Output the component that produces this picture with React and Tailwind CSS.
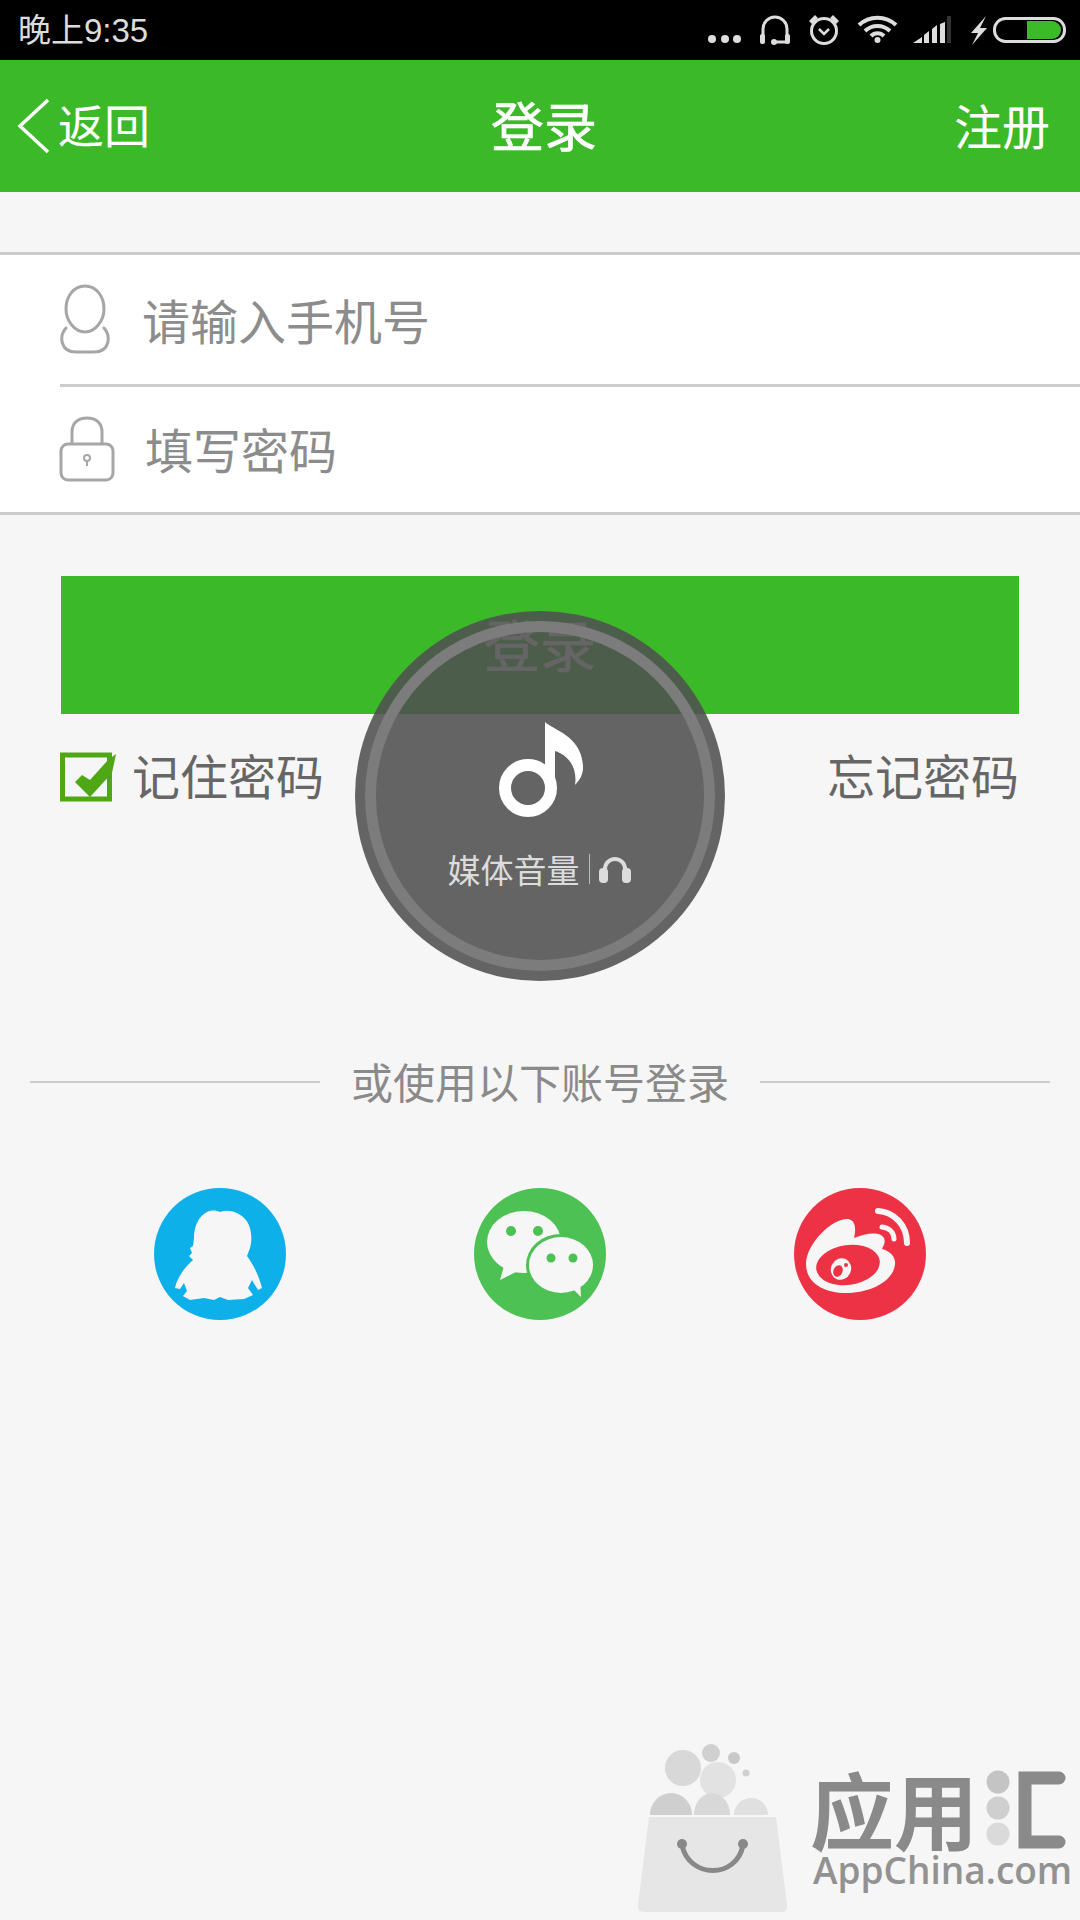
import React from 'react'

const cjk = { fontFamily: '"Noto Sans CJK SC", "Noto Sans", sans-serif' }

function StatusIcons() {
  return (
    <div className="flex items-center">
      <svg width="370" height="60" viewBox="0 0 370 60" fill="none">
        {/* dots */}
        <circle cx="12" cy="39" r="4" fill="#ddd" />
        <circle cx="25" cy="39" r="4" fill="#ddd" />
        <circle cx="37" cy="39" r="4" fill="#ddd" />
        {/* headset */}
        <path d="M63 37V29a12 12 0 0 1 24 0V37" stroke="#ddd" strokeWidth="3" />
        <rect x="60" y="34" width="5" height="10" rx="2" fill="#ddd" />
        <rect x="85" y="34" width="5" height="10" rx="2" fill="#ddd" />
        <path d="M74 42h13" stroke="#ddd" strokeWidth="3" />
        <circle cx="74" cy="42" r="3" fill="#ddd" />
        {/* alarm */}
        <circle cx="124" cy="31" r="12.500" stroke="#ddd" strokeWidth="3" />
        <path d="M119 29l5 5 5-5" stroke="#ddd" strokeWidth="2.500" />
        <path d="M109 21l6-6 3 3-6 6zM139 21l-6-6-3 3 6 6z" fill="#ddd" />
        {/* wifi */}
        <path d="M159 25a27 27 0 0 1 37 0" stroke="#ddd" strokeWidth="4" />
        <path d="M165 31a18 18 0 0 1 25 0" stroke="#ddd" strokeWidth="4" />
        <path d="M171 36a9 9 0 0 1 13 0" stroke="#ddd" strokeWidth="4" />
        <circle cx="177.500" cy="40" r="3" fill="#ddd" />
        {/* signal */}
        <path d="M213 43l9-6v6zM224 35l5-4v12h-5zM232 29l5-4v18h-5zM240 24l5-2v21h-5z" fill="#ddd" />
        <rect x="247" y="16" width="4" height="27" fill="#333" />
        {/* bolt */}
        <path d="M286 16l-15 17h7l-6 12 15-17h-7z" fill="#ddd" />
        {/* battery */}
        <rect x="294.500" y="18.500" width="70" height="23" rx="11" stroke="#ddd" strokeWidth="3" />
        <path d="M327 21h25a9 9 0 0 1 0 18h-25z" fill="#3cbb28" />
      </svg>
    </div>
  )
}

function UserIcon() {
  return (
    <svg width="52" height="72" viewBox="0 0 52 72" fill="none" stroke="#a6a6a6" strokeWidth="3" className="-ml-px">
      <path d="M26 2c11 0 19 10 19 23 0 12-9 23-19 23S7 37 7 25C7 12 15 2 26 2z" />
      <path d="M7 44c-7 8-6 24 10 24h18c16 0 17-16 10-24" strokeLinecap="round" />
    </svg>
  )
}

function LockIcon() {
  return (
    <svg width="56" height="66" viewBox="0 0 56 66" fill="none" stroke="#a6a6a6" strokeWidth="3" className="-ml-px -mt-[2px]">
      <path d="M13 28V16C13 7 19 2 28 2s15 5 15 14v12" />
      <rect x="2" y="28" width="52" height="36" rx="7" />
      <circle cx="28" cy="42" r="3" strokeWidth="2" />
      <path d="M28 45v5" strokeWidth="2" />
    </svg>
  )
}

function QQIcon() {
  return (
    <svg width="132" height="132" viewBox="0 0 132 132">
      <circle cx="66" cy="66" r="66" fill="#0db0e8" />
      <path
        d="M66 24C62 22 57 22 53 24C45 28 40 38 40 50L39 58L36 60L38 65L35 68L39 72C30 80 25 88 22 96L21 100L26 101L30 95L33 103L29 108L36 112L50 110L60 112L66 109L74 112L90 111L99 107L94 100L98 92L104 102L108 100C105 88 100 78 93 68L96 60C99 50 97 36 90 30C84 24 74 21 66 24Z"
        fill="#f6f6f6"
      />
    </svg>
  )
}

function WeChatIcon() {
  return (
    <svg width="132" height="132" viewBox="0 0 132 132">
      <circle cx="66" cy="66" r="66" fill="#4dc153" />
      <ellipse cx="50" cy="54" rx="37" ry="31" fill="#f6f6f6" />
      <path d="M30 78l-4 14 20-10z" fill="#f6f6f6" />
      <circle cx="37" cy="43" r="5" fill="#4dc153" />
      <circle cx="64" cy="43" r="5" fill="#4dc153" />
      <ellipse cx="87" cy="77" rx="35" ry="31" fill="#4dc153" />
      <ellipse cx="87" cy="77" rx="32" ry="28" fill="#f6f6f6" />
      <path d="M96 98l11 11-1-18z" fill="#f6f6f6" />
      <circle cx="77" cy="70" r="4.500" fill="#4dc153" />
      <circle cx="99" cy="70" r="4.500" fill="#4dc153" />
    </svg>
  )
}

function WeiboIcon() {
  return (
    <svg width="132" height="132" viewBox="0 0 132 132">
      <circle cx="66" cy="66" r="66" fill="#ee3245" />
      <path
        d="M12 76C12 56 38 30 54 31C62 32 62 42 60 50C72 45 86 43 90 50C92 55 89 58 88 61C96 63 102 69 101 76C100 92 78 105 52 105C30 105 12 95 12 76Z"
        fill="#f6f6f6"
      />
      <ellipse cx="54" cy="77" rx="32" ry="20" fill="#ee3245" transform="rotate(-8 54 77)" />
      <ellipse cx="47" cy="81" rx="10" ry="11" fill="#f6f6f6" transform="rotate(25 47 81)" />
      <ellipse cx="44" cy="83" rx="4.500" ry="6" fill="#ee3245" transform="rotate(25 44 83)" />
      <circle cx="52" cy="77" r="2" fill="#ee3245" />
      <path d="M84 23c16 1 29 14 29 32" stroke="#f6f6f6" strokeWidth="6" fill="none" strokeLinecap="round" />
      <path d="M88 39c7 1 12 5 12 12" stroke="#f6f6f6" strokeWidth="5" fill="none" strokeLinecap="round" />
    </svg>
  )
}

function VolumeOverlay() {
  return (
    <div className="absolute left-[355px] top-[611px] w-[370px] h-[370px] rounded-full bg-[rgba(80,80,80,0.88)] p-[10px]">
      <div className="w-full h-full rounded-full border-[11px] border-[#7c7c7c] flex flex-col items-center pt-[90px]">
        <svg width="86" height="96" viewBox="0 0 86 96" fill="none" className="ml-[2px]">
          <circle cx="30" cy="66" r="23" stroke="#fff" strokeWidth="12" />
          <path d="M47 66V0c8 8 38 14 38 46 0 6-3 12-8 17 2-12-2-28-20-34v37z" fill="#fff" />
        </svg>
        <div className="flex items-center mt-[29px] -ml-[2px] text-[#dcdcdc] text-[33px] leading-[44px]" style={cjk}>
          <span>媒体音量</span>
          <span className="w-px h-[30px] bg-[#bbb] mx-[9px]" />
          <svg width="32" height="28" viewBox="0 0 32 28" fill="none">
            <path d="M6 20V14a10 10 0 0 1 20 0v6" stroke="#dcdcdc" strokeWidth="4" />
            <rect x="0" y="13" width="9" height="15" rx="4" fill="#dcdcdc" />
            <rect x="23" y="13" width="9" height="15" rx="4" fill="#dcdcdc" />
          </svg>
        </div>
      </div>
    </div>
  )
}

function Watermark() {
  return (
    <div className="absolute left-[638px] top-[1742px] flex items-start gap-[22px]">
      <svg width="150" height="170" viewBox="0 0 150 170">
        <circle cx="73" cy="11" r="9" fill="#d0d0d0" />
        <circle cx="96" cy="16" r="6" fill="#c8c8c8" />
        <circle cx="108" cy="31" r="3.500" fill="#d0d0d0" />
        <circle cx="45" cy="26" r="18" fill="#d8d8d8" />
        <circle cx="80" cy="38" r="18" fill="#e2e2e2" />
        <path d="M12 73a21 22 0 1 1 42 0z" fill="#cfcfcf" />
        <path d="M56 73a18 22 0 1 1 36 0z" fill="#d8d8d8" />
        <path d="M96 73a17 17 0 1 1 34 0z" fill="#e0e0e0" />
        <path d="M11 75h127l11 88q1 7-7 7H7q-8 0-7-7z" fill="#e6e6e6" />
        <path d="M44 103c7 34 55 34 61 0" fill="none" stroke="#888" strokeWidth="5" />
        <circle cx="44" cy="102" r="5" fill="#888" />
        <circle cx="105" cy="102" r="5" fill="#888" />
      </svg>
      <div className="flex flex-col pt-[24px]">
        <div className="flex items-center h-[84px]">
          <span className="text-[#8a8a8a] text-[84px] leading-[84px] font-bold" style={cjk}>
            应用
          </span>
          <svg width="86" height="84" viewBox="0 0 86 84" className="ml-[6px]">
            <circle cx="14" cy="16" r="11.500" fill="#c4c4c4" />
            <circle cx="14" cy="42" r="11.500" fill="#cfcfcf" />
            <circle cx="14" cy="68" r="11.500" fill="#dadada" />
            <path d="M75 12H41v64h34" fill="none" stroke="#8a8a8a" strokeWidth="13" strokeLinecap="round" />
          </svg>
        </div>
        <span className="pl-[3px] text-[#929292] text-[37px] leading-[40px] font-semibold whitespace-nowrap [font-family:'Open_Sans',sans-serif]">
          AppChina.com
        </span>
      </div>
    </div>
  )
}

export default function App() {
  return (
    <div className="relative w-[1080px] h-[1920px] overflow-hidden bg-[#f6f6f6] flex flex-col" style={cjk}>
      <div className="h-[60px] bg-black flex items-center justify-between pl-[18px] pr-[10px] shrink-0">
        <span className="text-[#dcdcdc] text-[33px] leading-[60px] pb-[2px]">
          晚上<span className="[font-family:'Liberation_Sans',sans-serif]">9:35</span>
        </span>
        <StatusIcons />
      </div>

      <div className="h-[132px] bg-[#3cb928] flex items-center justify-between text-white shrink-0">
        <div className="flex items-center pl-[16px] gap-[6px] w-[200px]">
          <svg width="36" height="56" viewBox="0 0 36 56" fill="none">
            <path d="M32 2L4 28l28 26" stroke="#fff" strokeWidth="3.500" />
          </svg>
          <span className="text-[46px] leading-[60px] mb-[6px]">返回</span>
        </div>
        <span className="ml-[8px] mb-[5px] text-[53px] leading-[60px] [-webkit-text-stroke:0.6px_white]">登录</span>
        <div className="w-[200px] mb-[5px] text-right pr-[30px] text-[48px] leading-[60px]">注册</div>
      </div>

      <div className="mt-[60px] bg-white border-y-[3px] border-[#cccccc] shrink-0">
        <div className="ml-[60px] h-[132px] flex items-center border-b-[3px] border-[#cccccc]">
          <UserIcon />
          <span className="ml-[31px] mb-[2px] text-[48px] text-[#8c8c8c] leading-[60px]">请输入手机号</span>
        </div>
        <div className="ml-[60px] h-[125px] flex items-center">
          <LockIcon />
          <span className="ml-[30px] mb-[4px] text-[48px] text-[#8c8c8c] leading-[60px]">填写密码</span>
        </div>
      </div>

      <div className="mt-[61px] mx-[61px] h-[138px] bg-[#3cb928] flex items-center justify-center text-white text-[56px] shrink-0">
        <span className="mb-[4px] [-webkit-text-stroke:0.6px_white]">登录</span>
      </div>

      <div className="mx-[61px] mt-[34px] flex items-center justify-between h-[56px] shrink-0">
        <div className="flex items-center gap-[16px]">
          <svg width="56" height="52" viewBox="0 0 56 52" fill="none" className="-ml-px">
            <rect x="2.500" y="5" width="47" height="44" stroke="#4fa716" strokeWidth="5" fill="#f6f6f6" />
            <path d="M15 32L22 25L30 30L48 10L56 4L52 23L30 47Z" fill="#4fa716" />
          </svg>
          <span className="mb-[4px] text-[48px] leading-[56px] text-[#666666]">记住密码</span>
        </div>
        <span className="mb-[4px] text-[48px] leading-[56px] text-[#666666]">忘记密码</span>
      </div>

      <div className="mx-[30px] mt-[252px] flex items-center justify-between shrink-0">
        <div className="w-[290px] h-[2px] bg-[#cccccc]" />
        <span className="text-[42px] leading-[50px] text-[#8a8a8a] mb-[2px]">或使用以下账号登录</span>
        <div className="w-[290px] h-[2px] bg-[#cccccc]" />
      </div>

      <div className="mt-[80px] px-[154px] flex items-center justify-between shrink-0">
        <QQIcon />
        <WeChatIcon />
        <WeiboIcon />
      </div>

      <VolumeOverlay />
      <Watermark />
    </div>
  )
}
